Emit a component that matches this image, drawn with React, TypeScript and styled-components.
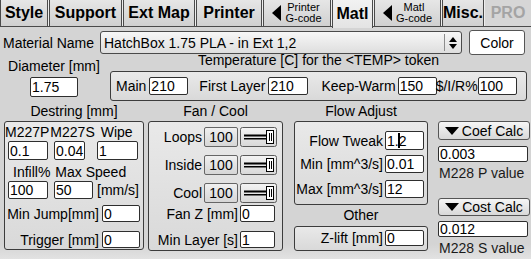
import React from 'react';
import styled, { createGlobalStyle } from 'styled-components';

const GlobalStyle = createGlobalStyle`
  html, body { margin: 0; padding: 0; }
  body { font-family: "Liberation Sans", Arial, sans-serif; background: #d4d4d4; }
  * { box-sizing: border-box; }
`;

const Page = styled.div`
  width: 531px;
  height: 259px;
  overflow: hidden;
  background: linear-gradient(to bottom, #d4d4d4 0px, #d4d4d4 244px, #e2e2e2 259px);
  color: #000;
  font-size: 14px;
  line-height: 16px;
  display: flex;
  flex-direction: column;
`;

/* ---------- Tabs ---------- */
const TabBar = styled.div`
  display: flex;
  align-items: flex-start;
  gap: 1px;
  height: 27px;
  border-bottom: 1px solid #4a4a4a;
  background: #eeeeee;
  flex: none;
`;

const Tab = styled.div<{ $w?: number; $active?: boolean; $muted?: boolean }>`
  flex: ${p => (p.$w ? `0 0 ${p.$w}px` : '1 1 auto')};
  height: ${p => (p.$active ? 28 : 26)}px;
  display: flex;
  align-items: center;
  justify-content: center;
  gap: 4px;
  border-left: 1px solid ${p => (p.$muted ? 'transparent' : '#4a4a4a')};
  border-right: 1px solid ${p => (p.$muted ? 'transparent' : '#4a4a4a')};
  background: ${p =>
    p.$active
      ? 'linear-gradient(#f2f2f2, #e4e4e4)'
      : p.$muted
      ? '#d6d6d6'
      : 'linear-gradient(#e6e6e6, #d0d0d0)'};
  font-size: 16px;
  font-weight: bold;
  white-space: nowrap;
  color: ${p => (p.$muted ? '#a4a4a4' : '#000')};
  position: relative;
  z-index: ${p => (p.$active ? 1 : 0)};
`;

const TabSmall = styled.span`
  display: flex;
  flex-direction: column;
  align-items: center;
  font-size: 11px;
  line-height: 11px;
  font-weight: normal;
`;

const LeftTriangle = () => (
  <svg width="9" height="16" viewBox="0 0 9 16">
    <polygon points="9,0 9,16 0,8" fill="#000" />
  </svg>
);

/* ---------- Material row ---------- */
const MaterialRow = styled.div`
  display: flex;
  align-items: center;
  height: 25px;
  margin-top: 3px;
  padding-left: 3px;
  flex: none;
`;

const RowLabel = styled.span<{ $w: number }>`
  width: ${p => p.$w}px;
  flex: none;
  white-space: nowrap;
`;

const Select = styled.div`
  width: 362px;
  height: 23px;
  border: 1px solid #4a4a4a;
  border-radius: 3px;
  background: linear-gradient(#f7f7f7, #dedede);
  display: flex;
  align-items: center;
  flex: none;
`;

const SelectText = styled.span`
  flex: 1;
  padding-left: 3px;
  white-space: nowrap;
`;

const SelectArrows = styled.span`
  width: 17px;
  height: 17px;
  border-left: 1px solid #8c8c8c;
  display: flex;
  align-items: center;
  justify-content: center;
`;

const ColorButton = styled.div`
  margin-left: 7px;
  width: 56px;
  height: 25px;
  background: #fff;
  border: 1px solid #555;
  border-radius: 3px;
  display: flex;
  align-items: center;
  justify-content: center;
  flex: none;
`;

/* ---------- Diameter / temperature row ---------- */
const TopRow = styled.div`
  display: flex;
  height: 46px;
  flex: none;
`;

const DiameterCol = styled.div`
  width: 106px;
  flex: none;
  display: flex;
  flex-direction: column;
  align-items: center;
  padding-top: 3px;
  padding-left: 2px;
`;

const TempCol = styled.div`
  margin-left: 4px;
  width: 417px;
  flex: none;
  display: flex;
  flex-direction: column;
`;

const TempTitle = styled.div`
  text-align: center;
  line-height: 16px;
  margin-top: -3px;
  white-space: nowrap;
`;

const TempBox = styled.div`
  margin-top: 3px;
  height: 30px;
  border: 1px solid #3c3c3c;
  border-radius: 3px;
  background: linear-gradient(#e9e9e9, #d9d9d9);
  display: flex;
  align-items: center;
  padding-left: 4px;
`;

const InlineLabel = styled.span<{ $ml?: number }>`
  margin-left: ${p => p.$ml ?? 0}px;
  white-space: nowrap;
  flex: none;
`;

/* ---------- Fields ---------- */
const Field = styled.div<{ $w: number; $h?: number; $ml?: number; $mr?: number }>`
  width: ${p => p.$w}px;
  height: ${p => p.$h ?? 18}px;
  margin-left: ${p => p.$ml ?? 0}px;
  margin-right: ${p => p.$mr ?? 0}px;
  flex: none;
  background: #fff;
  border: 1px solid #2e2e2e;
  border-radius: 2px;
  padding-left: 1px;
  display: flex;
  align-items: center;
  font-size: 14px;
  white-space: nowrap;
  overflow: hidden;
`;

const Caret = styled.span`
  display: inline-block;
  width: 2px;
  height: 15px;
  background: #000;
  margin: 0 -1px 0 -1px;
`;

const ValueBox = styled.div`
  width: 34px;
  height: 20px;
  flex: none;
  border: 1px solid #666;
  border-radius: 2px;
  background: linear-gradient(#f0f0f0, #d6d6d6);
  display: flex;
  align-items: center;
  justify-content: center;
`;

const Slider = () => (
  <svg width="37" height="20" viewBox="0 0 37 20" style={{ flex: 'none' }}>
    <defs>
      <linearGradient id="sg" x1="0" y1="0" x2="0" y2="1">
        <stop offset="0" stopColor="#f4f4f4" />
        <stop offset="1" stopColor="#d8d8d8" />
      </linearGradient>
    </defs>
    <rect x="0.5" y="0.5" width="36" height="19" rx="2" fill="url(#sg)" stroke="#5a5a5a" />
    <rect x="4" y="7.5" width="24" height="2" fill="#000" />
    <rect x="4" y="11" width="24" height="1.5" fill="#000" />
    <rect x="26.5" y="3.5" width="7" height="13" fill="#fff" stroke="#000" />
    <line x1="29.5" y1="6" x2="29.5" y2="14" stroke="#000" />
    <line x1="31.5" y1="6" x2="31.5" y2="14" stroke="#000" />
  </svg>
);

/* ---------- Bottom sections ---------- */
const BottomRow = styled.div`
  display: flex;
  align-items: flex-start;
  padding-left: 4px;
  flex: none;
`;

const Column = styled.div<{ $w: number; $ml?: number; $pt?: number }>`
  width: ${p => p.$w}px;
  margin-left: ${p => p.$ml ?? 0}px;
  padding-top: ${p => p.$pt ?? 0}px;
  flex: none;
  display: flex;
  flex-direction: column;
`;

const SectionTitle = styled.div<{ $h?: number }>`
  height: ${p => p.$h ?? 20}px;
  line-height: ${p => p.$h ?? 20}px;
  text-align: center;
  white-space: nowrap;
`;

const GroupBox = styled.div<{ $h: number; $pt?: number; $pl?: number; $pr?: number }>`
  height: ${p => p.$h}px;
  border: 1px solid #3c3c3c;
  border-radius: 3px;
  background: linear-gradient(#e9e9e9, #d9d9d9);
  padding-top: ${p => p.$pt ?? 0}px;
  padding-left: ${p => p.$pl ?? 0}px;
  padding-right: ${p => p.$pr ?? 0}px;
  display: flex;
  flex-direction: column;
`;

const FlowRow = styled.div<{ $mt?: number; $h?: number }>`
  display: flex;
  align-items: center;
  height: ${p => p.$h ?? 18}px;
  margin-top: ${p => p.$mt ?? 0}px;
  white-space: nowrap;
`;

const RightRow = styled(FlowRow)`
  justify-content: flex-end;
  gap: 2px;
`;

const CalcButton = styled.div<{ $h: number; $mt?: number }>`
  height: ${p => p.$h}px;
  margin-top: ${p => p.$mt ?? 0}px;
  border: 1px solid #555;
  border-radius: 3px;
  background: linear-gradient(#f6f6f6, #d8d8d8);
  display: flex;
  align-items: center;
  justify-content: center;
  gap: 3px;
  white-space: nowrap;
`;

const Note = styled.div<{ $mt?: number }>`
  margin-top: ${p => p.$mt ?? 0}px;
  line-height: 16px;
  padding-left: 1px;
  color: #1a1a1a;
  white-space: nowrap;
`;

const DownTriangle = () => (
  <svg width="14" height="8" viewBox="0 0 14 8">
    <polygon points="0,0 14,0 7,8" fill="#000" />
  </svg>
);

const UpDown = () => (
  <svg width="8" height="12" viewBox="0 0 8 12">
    <polygon points="0,5 8,5 4,0" fill="#000" />
    <polygon points="0,7 8,7 4,12" fill="#000" />
  </svg>
);

const FanRow: React.FC<{ label: string; mt?: number }> = ({ label, mt }) => (
  <RightRow $mt={mt} $h={20}>
    <span>{label}</span>
    <ValueBox>100</ValueBox>
    <Slider />
  </RightRow>
);

export default function App() {
  return (
    <>
      <GlobalStyle />
      <Page>
        <TabBar>
          <Tab $w={48}>Style</Tab>
          <Tab $w={73}>Support</Tab>
          <Tab $w={72}>Ext Map</Tab>
          <Tab $w={66}>Printer</Tab>
          <Tab $w={68}>
            <LeftTriangle />
            <TabSmall>
              <span>Printer</span>
              <span>G-code</span>
            </TabSmall>
          </Tab>
          <Tab $w={41} $active>Matl</Tab>
          <Tab $w={67}>
            <LeftTriangle />
            <TabSmall>
              <span>Matl</span>
              <span>G-code</span>
            </TabSmall>
          </Tab>
          <Tab $w={39}>Misc.</Tab>
          <Tab $muted>PRO</Tab>
        </TabBar>

        <MaterialRow>
          <RowLabel $w={97}>Material Name</RowLabel>
          <Select>
            <SelectText>HatchBox 1.75 PLA - in Ext 1,2</SelectText>
            <SelectArrows>
              <UpDown />
            </SelectArrows>
          </Select>
          <ColorButton>Color</ColorButton>
        </MaterialRow>

        <TopRow>
          <DiameterCol>
            <span>Diameter [mm]</span>
            <Field $w={48} $h={20} style={{ marginTop: 3 }}>1.75</Field>
          </DiameterCol>
          <TempCol>
            <TempTitle>Temperature [C] for the &lt;TEMP&gt; token</TempTitle>
            <TempBox>
              <InlineLabel $ml={1}>Main</InlineLabel>
              <Field $w={39} $ml={3}>210</Field>
              <InlineLabel $ml={11}>First Layer</InlineLabel>
              <Field $w={40} $ml={3}>210</Field>
              <InlineLabel $ml={13}>Keep-Warm</InlineLabel>
              <Field $w={39} $ml={2}>150</Field>
              <InlineLabel $ml={-1}>$/I/R%</InlineLabel>
              <Field $w={39} $ml={0}>100</Field>
            </TempBox>
          </TempCol>
        </TopRow>

        <BottomRow>
          <Column $w={140}>
            <SectionTitle>Destring [mm]</SectionTitle>
            <GroupBox $h={129} $pt={2} $pl={2}>
              <FlowRow $h={16}>
                <InlineLabel $ml={-2}>M227P</InlineLabel>
                <InlineLabel $ml={1}>M227S</InlineLabel>
                <InlineLabel $ml={6}>Wipe</InlineLabel>
              </FlowRow>
              <FlowRow $h={19} $mt={1}>
                <Field $w={40} $h={19} $ml={1}>0.1</Field>
                <Field $w={31} $h={19} $ml={6}>0.04</Field>
                <Field $w={41} $h={19} $ml={12}>1</Field>
              </FlowRow>
              <FlowRow $h={16} $mt={4}>
                <InlineLabel $ml={6}>Infill%</InlineLabel>
                <InlineLabel $ml={5}>Max Speed</InlineLabel>
              </FlowRow>
              <FlowRow $h={18} $mt={1}>
                <Field $w={40} $ml={1}>100</Field>
                <Field $w={39} $ml={6}>50</Field>
                <InlineLabel $ml={4}>[mm/s]</InlineLabel>
              </FlowRow>
              <RightRow $h={17} $mt={6} style={{ paddingRight: 3, gap: 3 }}>
                <span>Min Jump[mm]</span>
                <Field $w={38} $h={17}>0</Field>
              </RightRow>
              <RightRow $h={17} $mt={9} style={{ paddingRight: 3, gap: 3 }}>
                <span>Trigger [mm]</span>
                <Field $w={38} $h={17}>0</Field>
              </RightRow>
            </GroupBox>
          </Column>

          <Column $w={135} $ml={4}>
            <SectionTitle>Fan / Cool</SectionTitle>
            <GroupBox $h={130} $pt={5} $pr={5}>
              <FanRow label="Loops" />
              <FanRow label="Inside" mt={8} />
              <FanRow label="Cool" mt={8} />
              <RightRow $h={17} $mt={2}>
                <span>Fan Z [mm]</span>
                <Field $w={35} $h={17} $mr={2}>0</Field>
              </RightRow>
              <RightRow $h={17} $mt={9}>
                <span>Min Layer [s]</span>
                <Field $w={35} $h={17} $mr={2}>1</Field>
              </RightRow>
            </GroupBox>
          </Column>

          <Column $w={134} $ml={11}>
            <SectionTitle>Flow Adjust</SectionTitle>
            <GroupBox $h={84} $pt={9} $pr={3}>
              <RightRow $h={19}>
                <span>Flow Tweak</span>
                <Field $w={39} $h={19}>
                  1.<Caret />2
                </Field>
              </RightRow>
              <RightRow $mt={5}>
                <span>Min [mm^3/s]</span>
                <Field $w={39}>0.01</Field>
              </RightRow>
              <RightRow $mt={7}>
                <span>Max [mm^3/s]</span>
                <Field $w={39}>12</Field>
              </RightRow>
            </GroupBox>
            <SectionTitle $h={21}>Other</SectionTitle>
            <GroupBox $h={25} $pt={3} $pr={3}>
              <RightRow $h={16}>
                <span>Z-lift [mm]</span>
                <Field $w={39} $h={16}>0</Field>
              </RightRow>
            </GroupBox>
          </Column>

          <Column $w={92} $ml={10} $pt={20}>
            <CalcButton $h={19}>
              <DownTriangle />
              <span>Coef Calc</span>
            </CalcButton>
            <Field $w={90} $h={16} style={{ marginTop: 6 }}>0.003</Field>
            <Note $mt={3}>M228 P value</Note>
            <CalcButton $h={18} $mt={17}>
              <DownTriangle />
              <span>Cost Calc</span>
            </CalcButton>
            <Field $w={90} $h={16} style={{ marginTop: 5 }}>0.012</Field>
            <Note $mt={3}>M228 S value</Note>
          </Column>
        </BottomRow>
      </Page>
    </>
  );
}
